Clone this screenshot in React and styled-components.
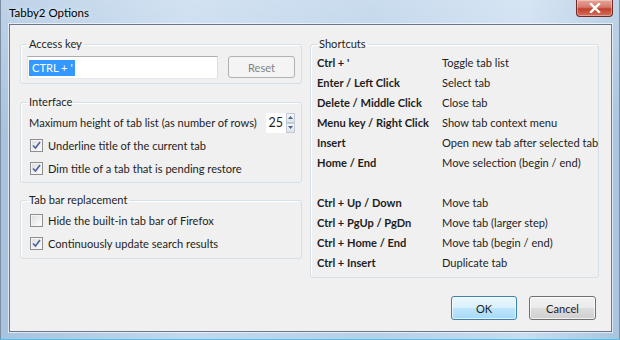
import React from 'react';
import styled, { createGlobalStyle } from 'styled-components';

const GlobalStyle = createGlobalStyle`
  html, body {
    margin: 0;
    padding: 0;
    width: 620px;
    height: 340px;
    overflow: hidden;
    background: #9fbad6;
  }
  body {
    font-family: Lato, "Noto Sans", sans-serif;
    font-size: 11.1px;
    color: #1e1e1e;
  }
`;

const shortcuts = [
  ['Ctrl + \'', 'Toggle tab list'],
  ['Enter / Left Click', 'Select tab'],
  ['Delete / Middle Click', 'Close tab'],
  ['Menu key / Right Click', 'Show tab context menu'],
  ['Insert', 'Open new tab after selected tab'],
  ['Home / End', 'Move selection (begin / end)'],
  null,
  ['Ctrl + Up / Down', 'Move tab'],
  ['Ctrl + PgUp / PgDn', 'Move tab (larger step)'],
  ['Ctrl + Home / End', 'Move tab (begin / end)'],
  ['Ctrl + Insert', 'Duplicate tab'],
];

const Check = ({ checked }) => (
  <CheckBox>
    {checked && (
      <svg width="9" height="9" viewBox="0 0 9 9">
        <path d="M1 4.5 L3.5 7 L8 1" fill="none" stroke="#4b62a0" strokeWidth="1.6" />
      </svg>
    )}
  </CheckBox>
);

const App = () => {
  return (
    <>
      <GlobalStyle />
      <Window>
        <TitleBar>
          <Title>Tabby2 Options</Title>
          <CloseButton>
            <svg width="12" height="10" viewBox="0 0 12 10">
              <path d="M2 1 L10 9 M10 1 L2 9" stroke="#fff" strokeWidth="2.4" strokeLinecap="square" />
            </svg>
          </CloseButton>
        </TitleBar>
        <Client>
          <Body>
            <Column>
              <Group $pt={4} $pb={4}>
                <Legend>Access key</Legend>
                <KeyRow>
                  <TextBox><Selected>CTRL + '</Selected></TextBox>
                  <ResetButton>Reset</ResetButton>
                </KeyRow>
              </Group>
              <Group $pt={1} $pb={2} $mt={10}>
                <Legend>Interface</Legend>
                <OptionRow>
                  <RowLabel>Maximum height of tab list (as number of rows)</RowLabel>
                  <Spinner>
                    <SpinValue>25</SpinValue>
                    <SpinButtons>
                      <SpinArrow>
                        <svg width="5" height="3" viewBox="0 0 5 3"><path d="M0 3 L2.5 0 L5 3 Z" fill="#4d6185" /></svg>
                      </SpinArrow>
                      <SpinArrow>
                        <svg width="5" height="3" viewBox="0 0 5 3"><path d="M0 0 L2.5 3 L5 0 Z" fill="#4d6185" /></svg>
                      </SpinArrow>
                    </SpinButtons>
                  </Spinner>
                </OptionRow>
                <OptionRow>
                  <CheckLabel><Check checked />Underline title of the current tab</CheckLabel>
                </OptionRow>
                <OptionRow>
                  <CheckLabel><Check checked />Dim title of a tab that is pending restore</CheckLabel>
                </OptionRow>
              </Group>
              <Group $pt={1} $pb={3} $mt={9}>
                <Legend>Tab bar replacement</Legend>
                <OptionRow>
                  <CheckLabel><Check />Hide the built-in tab bar of Firefox</CheckLabel>
                </OptionRow>
                <OptionRow>
                  <CheckLabel><Check checked />Continuously update search results</CheckLabel>
                </OptionRow>
              </Group>
            </Column>
            <Group $pt={0} $pb={5}>
              <Legend>Shortcuts</Legend>
              <ShortcutTable>
                {shortcuts.map((s, i) =>
                  s ? (
                    <React.Fragment key={i}>
                      <KeyName>{s[0]}</KeyName>
                      <KeyAction>{s[1]}</KeyAction>
                    </React.Fragment>
                  ) : (
                    <Spacer key={i} />
                  )
                )}
              </ShortcutTable>
            </Group>
          </Body>
          <Footer>
            <DialogButton $primary>OK</DialogButton>
            <DialogButton>Cancel</DialogButton>
          </Footer>
        </Client>
      </Window>
    </>
  );
};

export default App;

// Styles

const Window = styled.div`
  width: 620px;
  height: 340px;
  box-sizing: border-box;
  display: flex;
  flex-direction: column;
  padding: 0 8px 7px 9px;
  background:
    linear-gradient(180deg, rgba(255,255,255,0.25) 0%, rgba(255,255,255,0) 40%),
    linear-gradient(90deg, #a8c3df 0%, #c3d8ee 30%, #b7cfe8 60%, #c9dcf0 85%, #a9c4e0 100%);
  border-bottom: 1px solid #4fc1f0;
  box-shadow: inset 1px 0 #7d8ea3, inset -1px 0 #7d8ea3;
`;

const TitleBar = styled.div`
  height: 24px;
  display: flex;
  align-items: flex-start;
  justify-content: space-between;
`;

const Title = styled.div`
  font-size: 11.5px;
  line-height: 16px;
  padding-top: 5px;
  color: #000;
  text-shadow: 0 0 6px rgba(255,255,255,0.9);
`;

const CloseButton = styled.div`
  width: 37px;
  height: 17px;
  margin-right: -1px;
  box-sizing: border-box;
  display: flex;
  align-items: center;
  justify-content: center;
  border: 1px solid #6d2a26;
  border-top: none;
  border-radius: 0 0 4px 4px;
  background: linear-gradient(180deg, #e8a597 0%, #d57a6c 45%, #c2402c 55%, #d3705c 100%);
  box-shadow: inset 0 0 0 1px rgba(255,255,255,0.35);
`;

const Client = styled.div`
  flex: 1;
  display: flex;
  flex-direction: column;
  background: #f0f0f0;
  border: 1px solid #6b7787;
  box-shadow: 0 0 0 1px rgba(255,255,255,0.6);
  padding: 11px 12px 11px 10px;
`;

const Body = styled.div`
  display: grid;
  grid-template-columns: 282px 289px;
  column-gap: 8px;
  align-items: start;
`;

const Column = styled.div`
  display: flex;
  flex-direction: column;
`;

const Group = styled.fieldset`
  margin: ${(p) => p.$mt || 0}px 0 0 0;
  padding: ${(p) => p.$pt}px 6px ${(p) => p.$pb}px 6px;
  border: 1px solid #d5dfe5;
  border-radius: 3px;
  box-shadow: inset 1px 1px #fff;
  min-width: 0;
`;

const Legend = styled.legend`
  padding: 0 2px;
  margin-left: 0;
  line-height: 16px;
  color: #1e1e1e;
`;

const KeyRow = styled.div`
  display: flex;
  align-items: flex-start;
  gap: 10px;
`;

const TextBox = styled.div`
  width: 191px;
  height: 23px;
  box-sizing: border-box;
  background: #fff;
  border: 1px solid #abadb3;
  border-color: #abadb3 #dbdfe6 #e3e9ef #e2e3ea;
  padding: 2px 1px;
  display: flex;
  align-items: center;
`;

const Selected = styled.span`
  background: #3399ff;
  color: #fff;
  line-height: 16px;
  padding: 0 2px 0 3px;
`;

const ResetButton = styled.div`
  width: 67px;
  height: 22px;
  box-sizing: border-box;
  border: 1px solid #adb2b5;
  border-radius: 3px;
  background: #f4f4f4;
  color: #838383;
  display: flex;
  align-items: center;
  justify-content: center;
`;

const OptionRow = styled.div`
  height: 23px;
  display: flex;
  align-items: center;
  justify-content: space-between;
  white-space: nowrap;
`;

const RowLabel = styled.span`
  padding-left: 2px;
`;

const Spinner = styled.div`
  display: flex;
  height: 20px;
`;

const SpinValue = styled.div`
  width: 20px;
  box-sizing: border-box;
  background: #fff;
  border: 1px solid #fff;
  text-align: right;
  padding-right: 2px;
  line-height: 18px;
  font-size: 12.5px;
`;

const SpinButtons = styled.div`
  width: 9px;
  display: flex;
  flex-direction: column;
`;

const SpinArrow = styled.div`
  flex: 1;
  box-sizing: border-box;
  border: 1px solid #c3cad4;
  background: linear-gradient(180deg, #f6f8fb, #dde4ec);
  display: flex;
  align-items: center;
  justify-content: center;
`;

const CheckLabel = styled.label`
  display: flex;
  align-items: center;
  gap: 5px;
  padding-left: 3px;
`;

const CheckBox = styled.span`
  width: 13px;
  height: 13px;
  box-sizing: border-box;
  border: 1px solid #8f8f8f;
  background: linear-gradient(135deg, #dcdcdc 0%, #f4f4f4 70%, #fff 100%);
  box-shadow: inset 0 0 0 1px #f4f4f4;
  display: flex;
  align-items: center;
  justify-content: center;
`;

const ShortcutTable = styled.div`
  display: grid;
  grid-template-columns: 125px 1fr;
  grid-auto-rows: 20px;
  align-items: center;
  white-space: nowrap;
`;

const KeyName = styled.div`
  font-weight: 700;
`;

const KeyAction = styled.div``;

const Spacer = styled.div`
  grid-column: 1 / -1;
`;

const Footer = styled.div`
  margin-top: auto;
  display: flex;
  justify-content: flex-end;
  gap: 12px;
  padding-right: 3px;
`;

const DialogButton = styled.div`
  width: ${(p) => (p.$primary ? 66 : 67)}px;
  height: 24px;
  box-sizing: border-box;
  border: 1px solid ${(p) => (p.$primary ? '#3c7fb1' : '#707070')};
  border-radius: 3px;
  background: ${(p) =>
    p.$primary
      ? 'linear-gradient(180deg, #eaf6fd 0%, #d9f0fc 50%, #bee6fd 50%, #a7d9f5 100%)'
      : 'linear-gradient(180deg, #f2f2f2 0%, #ebebeb 50%, #dddddd 50%, #cfcfcf 100%)'};
  box-shadow: inset 0 0 0 1px rgba(255,255,255,0.7);
  display: flex;
  align-items: center;
  justify-content: center;
  color: #1e1e1e;
`;
